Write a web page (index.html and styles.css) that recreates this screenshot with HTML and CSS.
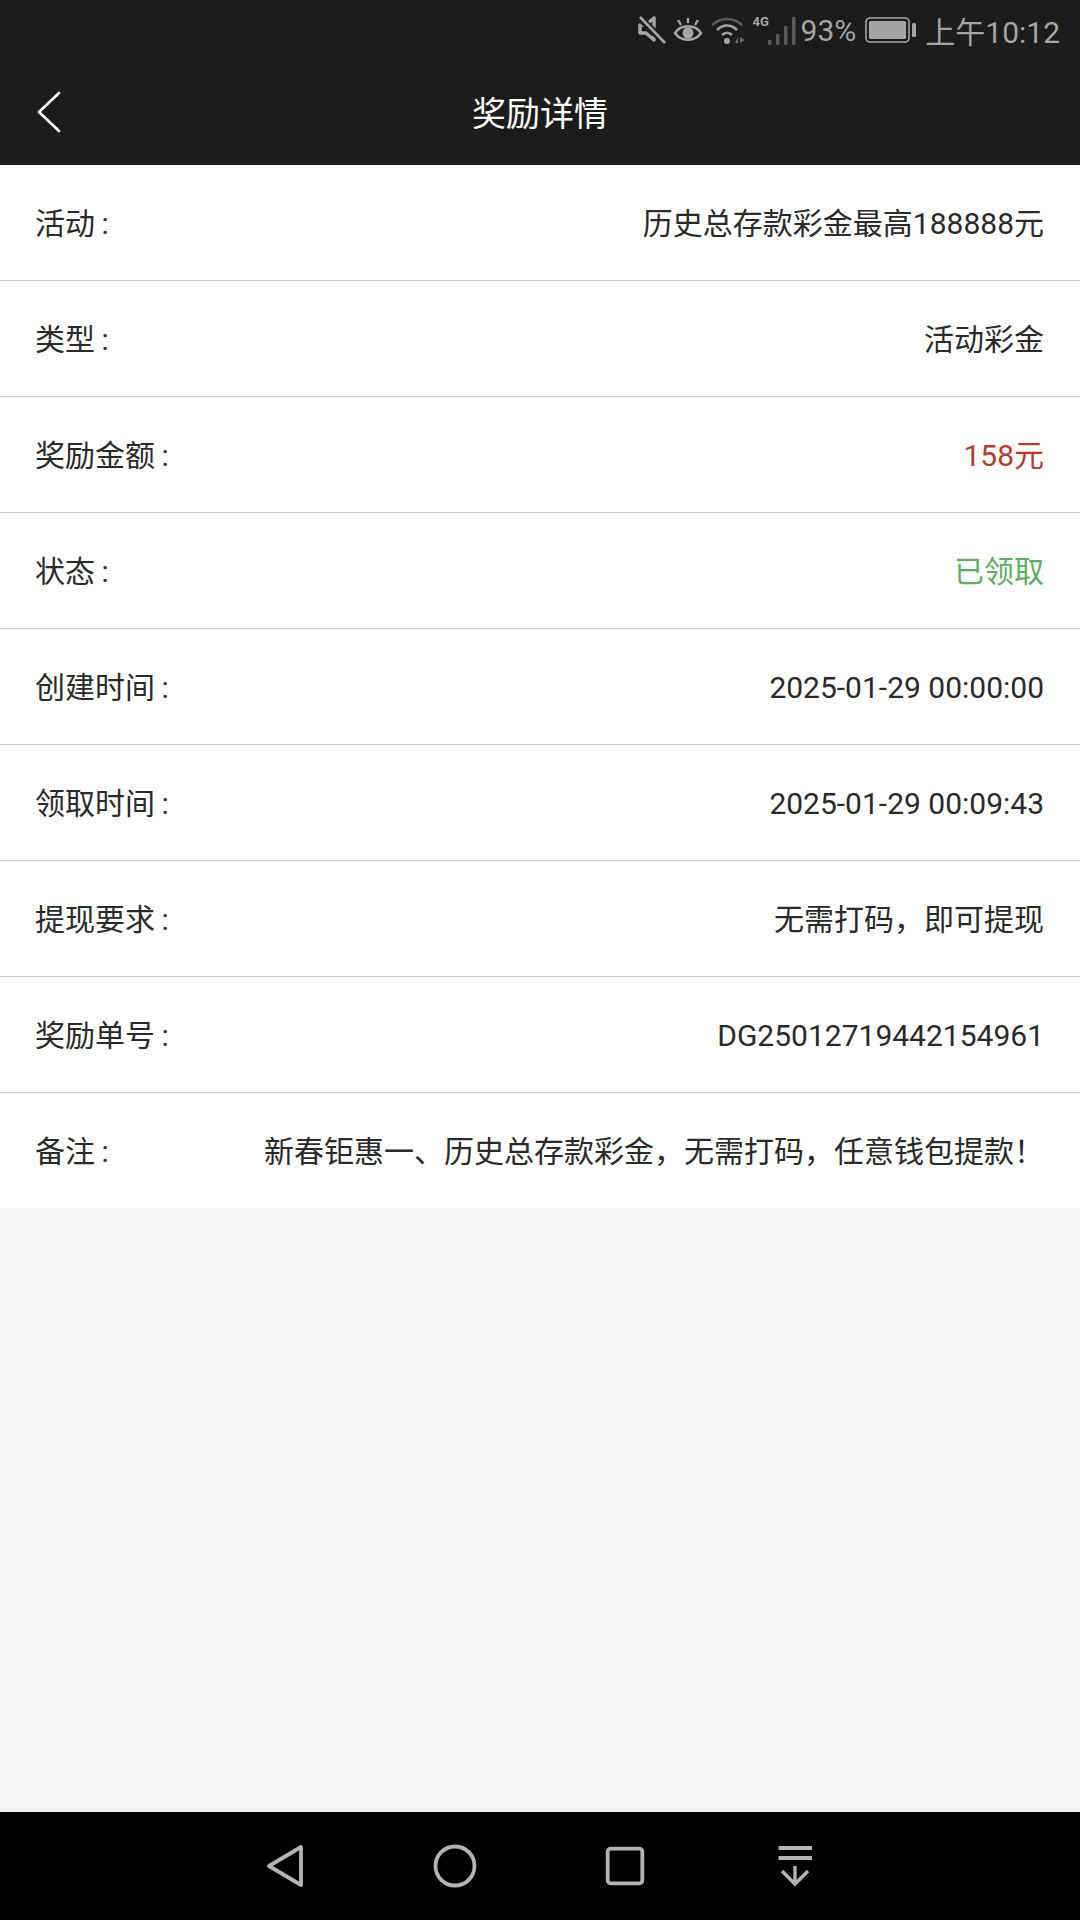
FILE: index.html
```html
<!DOCTYPE html>
<html lang="zh-CN">
<head>
<meta charset="utf-8">
<title>奖励详情</title>
<link rel="stylesheet" href="styles.css">
</head>
<body>
<div class="screen">
  <div class="statusbar">
    <svg class="ic ic-mute" width="28" height="30" viewBox="0 0 28 30"><path d="M2 10h6l8-7v22l-8-7H2z" fill="none" stroke="#a5a5a5" stroke-width="3.5" stroke-linejoin="round"/><path d="M1 2l26 26" stroke="#1c1c1c" stroke-width="7"/><path d="M2 2l25 26" stroke="#a5a5a5" stroke-width="2.6"/></svg>
    <svg class="ic ic-eye" width="30" height="28" viewBox="0 0 30 28"><path d="M2 17c6-9 20-9 26 0-6 9-20 9-26 0z" fill="none" stroke="#a5a5a5" stroke-width="2.6"/><circle cx="15" cy="17" r="5.5" fill="#a5a5a5"/><path d="M15 2v5M5 4l3 5M25 4l-3 5" stroke="#a5a5a5" stroke-width="2.4"/></svg>
    <svg class="ic ic-wifi" width="36" height="28" viewBox="0 0 36 28"><path d="M1 9c9-8 21-8 30 0" fill="none" stroke="#5a5a5a" stroke-width="2.6"/><path d="M6 14c6-6 14-6 20 0" fill="none" stroke="#a5a5a5" stroke-width="2.6"/><path d="M11 19c3-3 7-3 10 0" fill="none" stroke="#a5a5a5" stroke-width="2.6"/><circle cx="16" cy="25" r="3" fill="#a5a5a5"/><path d="M24 27l3-6v6zM29 21l5 3-5 3z" fill="#6a6a6a"/></svg>
    <span class="net">4G</span>
    <svg class="ic ic-signal" width="30" height="30" viewBox="0 0 30 30"><g fill="#5a5a5a"><rect x="1" y="24" width="3.5" height="5"/><rect x="9" y="18" width="3.5" height="11"/><rect x="17" y="10" width="3.5" height="19"/><rect x="25" y="1" width="3.5" height="28"/></g></svg>
    <span class="pct">93%</span>
    <svg class="ic ic-batt" width="52" height="26" viewBox="0 0 52 26"><rect x="1" y="1" width="43" height="24" rx="4" fill="none" stroke="#a5a5a5" stroke-width="1.6"/><rect x="4" y="4" width="37" height="18" rx="1.5" fill="#a5a5a5"/><rect x="47" y="6" width="4" height="14" rx="1.5" fill="#a5a5a5"/></svg>
    <span class="time">上午10:12</span>
  </div>

  <header class="topbar">
    <svg class="back" width="24" height="42" viewBox="0 0 24 42"><path d="M22 2L2 21l20 19" fill="none" stroke="#fff" stroke-width="2.6" stroke-linecap="round" stroke-linejoin="round"/></svg>
    <h1 class="title">奖励详情</h1>
  </header>

  <main class="list">
    <div class="row"><span class="label">活动 :</span><span>历史总存款彩金最高188888元</span></div>
    <div class="row"><span class="label">类型 :</span><span>活动彩金</span></div>
    <div class="row"><span class="label">奖励金额 :</span><span class="red">158元</span></div>
    <div class="row"><span class="label">状态 :</span><span class="green">已领取</span></div>
    <div class="row"><span class="label">创建时间 :</span><span>2025-01-29 00:00:00</span></div>
    <div class="row"><span class="label">领取时间 :</span><span>2025-01-29 00:09:43</span></div>
    <div class="row"><span class="label">提现要求 :</span><span>无需打码，即可提现</span></div>
    <div class="row"><span class="label">奖励单号 :</span><span>DG25012719442154961</span></div>
    <div class="row"><span class="label">备注 :</span><span>新春钜惠一、历史总存款彩金，无需打码，任意钱包提款！</span></div>
  </main>

  <nav class="navbar">
    <svg width="50" height="52" viewBox="0 0 50 52"><path d="M41 7v38L9 26z" fill="none" stroke="#b4b4b4" stroke-width="3.8" stroke-linejoin="round"/></svg>
    <svg width="50" height="52" viewBox="0 0 50 52"><circle cx="25" cy="26" r="19.5" fill="none" stroke="#b4b4b4" stroke-width="3.8"/></svg>
    <svg width="50" height="52" viewBox="0 0 50 52"><rect x="7.7" y="8.7" width="34.6" height="34.6" rx="3" fill="none" stroke="#b4b4b4" stroke-width="3.8"/></svg>
    <svg width="50" height="52" viewBox="0 0 50 52"><path d="M8.5 8h33.5M8.5 18h33.5" stroke="#b4b4b4" stroke-width="3.8"/><path d="M25 26v17M12 31l13 13 13-13" fill="none" stroke="#b4b4b4" stroke-width="3.4"/></svg>
  </nav>
</div>
</body>
</html>
```
FILE: styles.css
```css
* { box-sizing: border-box; margin: 0; padding: 0; }
html, body { width: 1080px; height: 1920px; overflow: hidden; }
body { font-family: Roboto, "Noto Sans CJK SC", sans-serif; background: #f4f4f4; }
.screen { width: 1080px; height: 1920px; display: flex; flex-direction: column; }

.statusbar {
  height: 60px;
  background: #1c1c1c;
  color: #a5a5a5;
  display: flex;
  justify-content: flex-end;
  align-items: center;
  padding-right: 20px;
  font-size: 30px;
}
.ic { flex: none; }
.ic-mute { margin-right: 7px; }
.ic-eye { margin-right: 8px; }
.net { font-size: 13px; font-weight: 700; align-self: flex-start; margin: 15px 0 0 6px; line-height: 14px; width: 15px; }
.ic-signal { margin-left: -1px; margin-top: 2px; }
.pct { margin-left: 4px; }
.ic-batt { margin-left: 9px; }
.time { margin-left: 8px; }

.topbar {
  height: 105px;
  background: #1c1c1c;
  display: grid;
  grid-template-columns: 1fr auto 1fr;
  align-items: center;
  padding: 0 37px;
}
.back { margin-top: -2px; }
.title {
  font-size: 34px;
  font-weight: 400;
  color: #fff;
  line-height: 1;
  margin-top: 2px;
}

.list { background: #fff; }
.row {
  height: 116px;
  padding: 3px 36px 0 35px;
  display: flex;
  justify-content: space-between;
  align-items: center;
  border-bottom: 1px solid #c6c6c6;
  font-size: 30px;
  line-height: 40px;
  color: #2a2a2a;
}
.row:last-child { height: 115px; border-bottom: 0; }
.label { word-spacing: -1px; }
.red { color: #b83a2c; }
.green { color: #5cae5c; }

.navbar {
  margin-top: auto;
  height: 108px;
  background: #000;
  display: flex;
  justify-content: center;
  align-items: center;
  gap: 120px;
}
```
